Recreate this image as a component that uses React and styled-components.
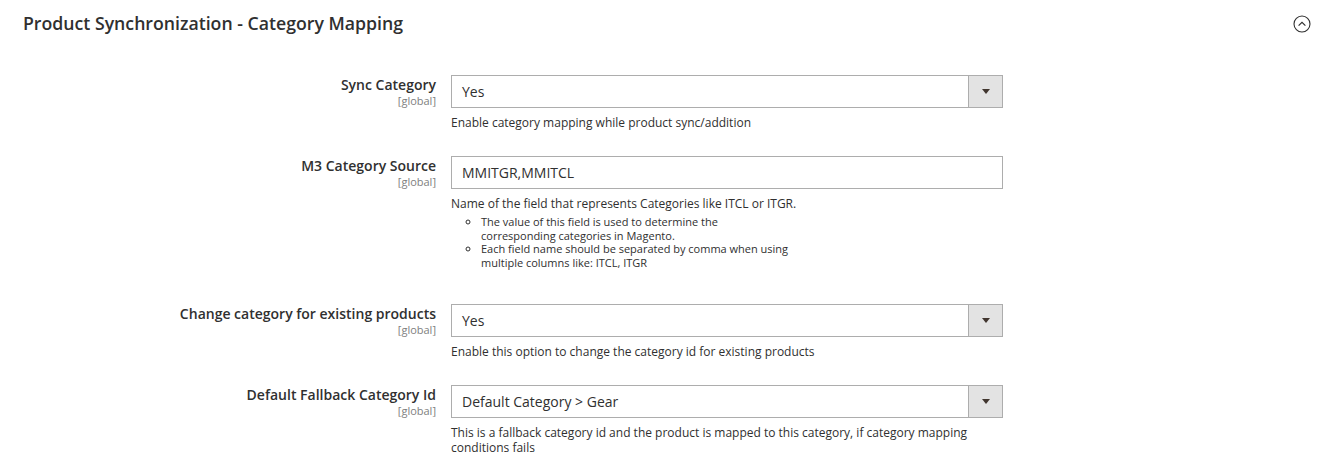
import React from "react";
import styled, { createGlobalStyle } from "styled-components";

const GlobalStyle = createGlobalStyle`
  body {
    margin: 0;
    background: #ffffff;
    font-family: "Open Sans", "Noto Sans", Arial, sans-serif;
    color: #303030;
  }
`;

const Section = styled.section`
  padding: 0 23px;
`;

const Header = styled.div`
  display: flex;
  align-items: center;
  justify-content: space-between;
  height: 45px;
  h2 {
    margin: 0;
    font-size: 17.7px;
    font-weight: 600;
    color: #303030;
  }
`;

const Toggle = styled.button`
  display: flex;
  align-items: center;
  justify-content: center;
  width: 18px;
  height: 18px;
  padding: 0;
  margin-top: 3px;
  border: none;
  background: none;
  cursor: pointer;
`;

const Fieldset = styled.div`
  padding-top: 30px;
`;

const Row = styled.div`
  display: grid;
  grid-template-columns: 413px 552px;
  column-gap: 15px;
  padding-bottom: ${(p) => p.$bottom || 26}px;
`;

const Label = styled.div`
  text-align: right;
  .title {
    font-size: 14px;
    font-weight: 600;
    line-height: 19px;
    color: #303030;
  }
  .scope {
    font-size: 11px;
    line-height: 13px;
    color: #808080;
  }
`;

const Control = styled.div`
  display: flex;
  flex-direction: column;
`;

const Field = styled.div`
  display: flex;
  height: 33px;
  box-sizing: border-box;
  border: 1px solid #adadad;
  background: #ffffff;
  .value {
    flex: 1;
    display: flex;
    align-items: center;
    padding-left: 10px;
    font-size: 14px;
    color: #303030;
  }
`;

const Arrow = styled.div`
  width: 33px;
  border-left: 1px solid #adadad;
  background: #e3e3e3;
  display: flex;
  align-items: center;
  justify-content: center;
  &::after {
    content: "";
    border-left: 4px solid transparent;
    border-right: 4px solid transparent;
    border-top: 5px solid #41362f;
  }
`;

const Note = styled.div`
  margin-top: 7px;
  font-size: 12px;
  line-height: 15px;
  color: #303030;
  ul {
    margin: 4px 0 0;
    padding-left: 30px;
    width: 312px;
    list-style: circle;
  }
  li {
    font-size: 11px;
    line-height: 13.7px;
  }
`;

function Select({ value }) {
  return (
    <Field>
      <div className="value">{value}</div>
      <Arrow />
    </Field>
  );
}

function Input({ value }) {
  return (
    <Field>
      <div className="value">{value}</div>
    </Field>
  );
}

function FormRow({ label, children, note, bottom }) {
  return (
    <Row $bottom={bottom}>
      <Label>
        <div className="title">{label}</div>
        <div className="scope">[global]</div>
      </Label>
      <Control>
        {children}
        <Note>{note}</Note>
      </Control>
    </Row>
  );
}

export default function App() {
  return (
    <>
      <GlobalStyle />
      <Section>
        <Header>
          <h2>Product Synchronization - Category Mapping</h2>
          <Toggle aria-label="collapse">
            <svg width="18" height="18" viewBox="0 0 18 18" fill="none">
              <circle cx="9" cy="9" r="8" stroke="#303030" strokeWidth="1.1" />
              <path d="M5.6 10.6 L9 7.3 L12.4 10.6" stroke="#303030" strokeWidth="1.2" />
            </svg>
          </Toggle>
        </Header>
        <Fieldset>
          <FormRow
            label="Sync Category"
            note="Enable category mapping while product sync/addition"
          >
            <Select value="Yes" />
          </FormRow>
          <FormRow
            label="M3 Category Source"
            bottom={34}
            note={
              <>
                Name of the field that represents Categories like ITCL or ITGR.
                <ul>
                  <li>
                    The value of this field is used to determine the
                    corresponding categories in Magento.
                  </li>
                  <li>
                    Each field name should be separated by comma when using
                    multiple columns like: ITCL, ITGR
                  </li>
                </ul>
              </>
            }
          >
            <Input value="MMITGR,MMITCL" />
          </FormRow>
          <FormRow
            label="Change category for existing products"
            note="Enable this option to change the category id for existing products"
          >
            <Select value="Yes" />
          </FormRow>
          <FormRow
            label="Default Fallback Category Id"
            note="This is a fallback category id and the product is mapped to this category, if category mapping conditions fails"
          >
            <Select value="Default Category > Gear" />
          </FormRow>
        </Fieldset>
      </Section>
    </>
  );
}
